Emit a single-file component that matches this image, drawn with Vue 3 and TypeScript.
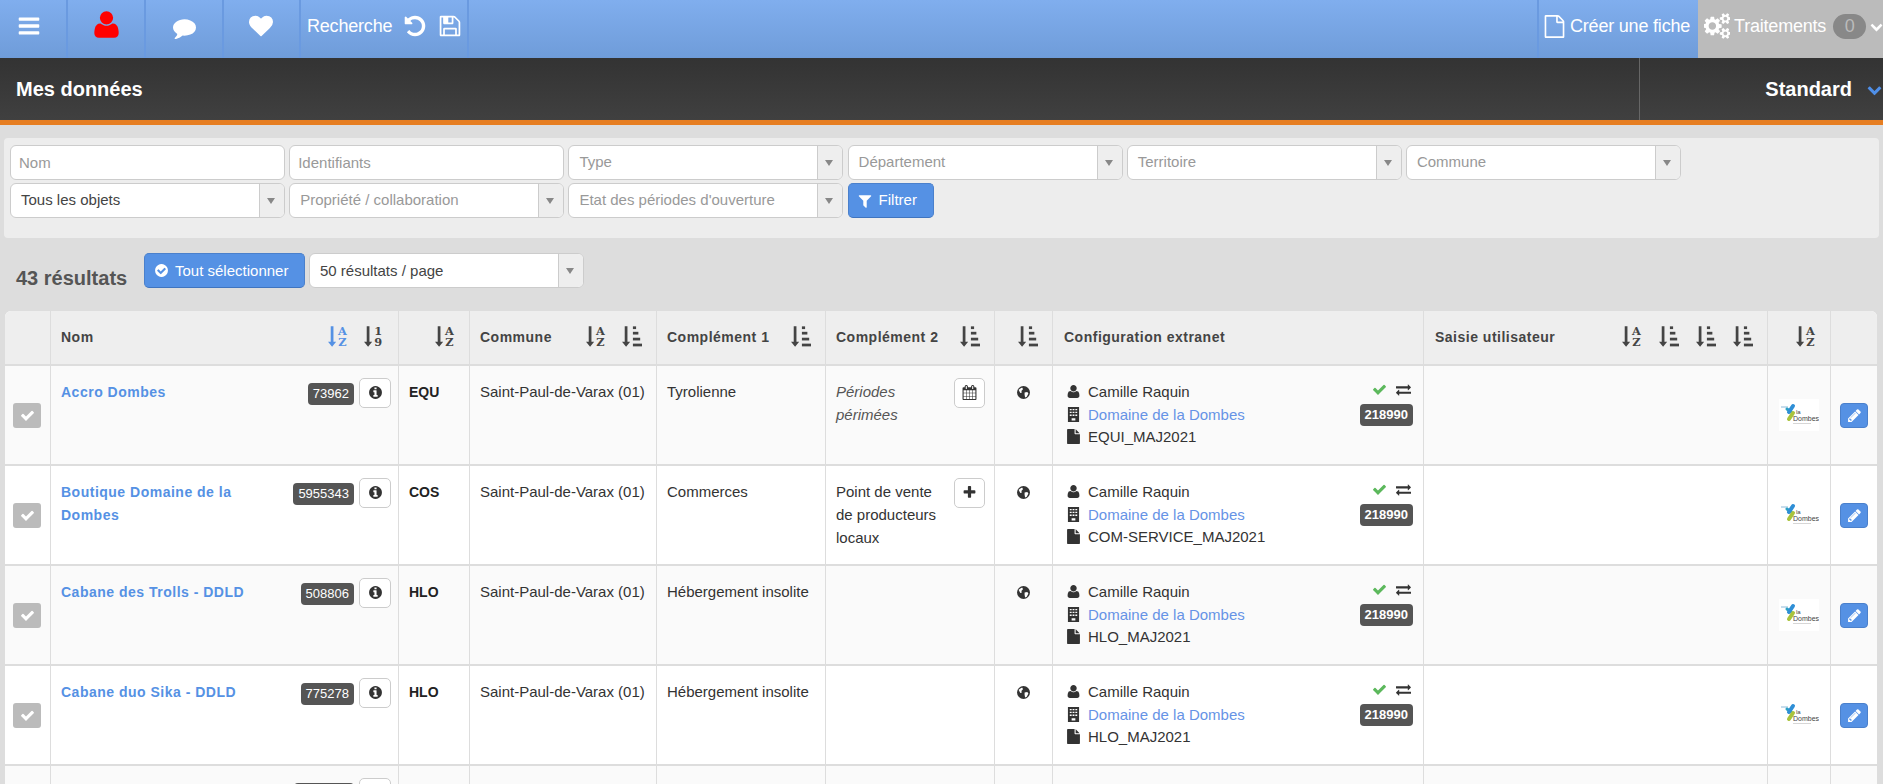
<template>
  <div class="page">
    <header class="topbar">
      <a class="nav-item burger"><svg class="ic" viewBox="0 0 1792 1792"><path :d="ic.bars" /></svg></a>
      <a class="nav-item user"><svg class="ic" viewBox="0 0 1792 1792"><path :d="ic.user" /></svg></a>
      <a class="nav-item comment"><svg class="ic" viewBox="0 0 1792 1792"><path :d="ic.comment" /></svg></a>
      <a class="nav-item heart"><svg class="ic" viewBox="0 0 1792 1792"><path :d="ic.heart" /></svg></a>
      <div class="nav-item search">
        <span>Recherche</span>
        <svg class="ic" viewBox="0 0 1792 1792"><path :d="ic.undo" /></svg>
        <svg class="ic" viewBox="0 0 1792 1792"><path :d="ic.save" /></svg>
      </div>
      <div class="spacer"></div>
      <a class="nav-item create">
        <svg class="ic" viewBox="0 0 1792 1792"><path :d="ic.fileO" /></svg>
        <span>Créer une fiche</span>
      </a>
      <div class="process">
        <svg class="ic" viewBox="0 0 1792 1792"><path :d="ic.cogs" /></svg>
        <span>Traitements</span>
        <b class="count">0</b>
        <svg class="ic caret" viewBox="0 0 1792 1792"><path :d="ic.chevron" /></svg>
      </div>
    </header>

    <div class="titlebar">
      <h1>Mes données</h1>
      <div class="view-switch">
        <strong>Standard</strong>
        <svg class="ic" viewBox="0 0 1792 1792"><path :d="ic.chevron" /></svg>
      </div>
    </div>

    <section class="filters">
      <input class="field input" placeholder="Nom" />
      <input class="field input" placeholder="Identifiants" />
      <div v-for="f in selectsTop" :key="f" class="field select">
        <span class="ph">{{ f }}</span><i class="arrow"></i>
      </div>
      <div class="field select"><span>Tous les objets</span><i class="arrow"></i></div>
      <div class="field select"><span class="ph">Propriété / collaboration</span><i class="arrow"></i></div>
      <div class="field select"><span class="ph">Etat des périodes d'ouverture</span><i class="arrow"></i></div>
      <button class="btn filter-btn">
        <svg class="ic" viewBox="0 0 1792 1792"><path :d="ic.filter" /></svg>Filtrer
      </button>
    </section>

    <div class="results">
      <span class="total">43 résultats</span>
      <button class="btn select-all">
        <svg class="ic" viewBox="0 0 1792 1792"><path :d="ic.checkCircle" /></svg>Tout sélectionner
      </button>
      <div class="field select per-page"><span>50 résultats / page</span><i class="arrow"></i></div>
    </div>

    <div class="table-wrap">
      <table>
        <colgroup>
          <col v-for="w in colWidths" :key="w.id" :style="{ width: w.px + 'px' }" />
        </colgroup>
        <thead>
          <tr>
            <th v-for="h in headers" :key="h.id" :class="h.id">
              <div class="th-in">
                <span class="th-label">{{ h.label }}</span>
                <span class="sorts">
                  <svg v-for="(s, i) in h.sorts" :key="i" class="sort" :class="{ active: s === 'az*' }" viewBox="0 -1.500 22 26.400">
                    <path d="M3 0h3v17h3l-4.500 5.500L0 17h3z" />
                    <template v-if="s === 'n'">
                      <rect x="12" y="0" width="3.500" height="3" />
                      <rect x="12" y="6" width="6" height="3" />
                      <rect x="12" y="12.500" width="8" height="3" />
                      <rect x="12" y="19" width="10" height="3" />
                    </template>
                    <template v-else>
                      <text x="16" y="10" text-anchor="middle">{{ s === '19' ? '1' : 'A' }}</text>
                      <text x="16" y="22" text-anchor="middle">{{ s === '19' ? '9' : 'Z' }}</text>
                    </template>
                  </svg>
                </span>
              </div>
            </th>
          </tr>
        </thead>
        <tbody>
          <tr v-for="r in rows" :key="r.id">
            <td class="mid">
              <span class="tick"><svg class="ic" viewBox="0 0 1792 1792"><path :d="ic.check" /></svg></span>
            </td>
            <td>
              <div class="split">
                <a class="name">{{ r.name }}</a>
                <div class="name-tools">
                  <span class="badge">{{ r.id }}</span>
                  <button class="tool info"><svg class="ic" viewBox="0 0 1792 1792"><path :d="ic.info" /></svg></button>
                </div>
              </div>
            </td>
            <td class="code">{{ r.code }}</td>
            <td>Saint-Paul-de-Varax (01)</td>
            <td>{{ r.c1 }}</td>
            <td>
              <div class="split">
                <span class="c2" :class="{ late: r.tool === 'calendar' }">{{ r.c2 }}</span>
                <button v-if="r.tool" class="tool small">
                  <svg class="ic" viewBox="0 0 1792 1792"><path :d="r.tool === 'calendar' ? ic.calendar : ic.plus" /></svg>
                </button>
              </div>
            </td>
            <td class="globe-cell">
              <svg class="globe" viewBox="0 0 24 24">
                <circle cx="12" cy="12" r="12" />
                <path d="M3 7c3-3 5-4 7-4l1 3-3 3 1 3-3 1zM14 12l5-1 2 3-3 6-3 1-1-5z" fill="#fff" />
              </svg>
            </td>
            <td>
              <div class="split">
                <ul class="conf">
                  <li><svg class="ic" viewBox="128 0 1536 1792"><path :d="ic.user" /></svg>Camille Raquin</li>
                  <li>
                    <svg class="ic" viewBox="0 0 14 16"><path d="M1 0h12v16H1zM3 2v1.500h2V2zm3 0v1.500h2V2zm3 0v1.500h2V2zM3 5v1.500h2V5zm3 0v1.500h2V5zm3 0v1.500h2V5zM3 8v1.500h2V8zm3 0v1.500h2V8zm3 0v1.500h2V8zM5 12v2.500h4V12z" fill-rule="evenodd" /></svg>
                    <a class="link">Domaine de la Dombes</a>
                  </li>
                  <li><svg class="ic" viewBox="128 0 1536 1792"><path :d="ic.file" /></svg>{{ r.tpl }}</li>
                </ul>
                <div class="conf-side">
                  <div class="conf-icons">
                    <svg class="ic ok" viewBox="0 0 1792 1792"><path :d="ic.check" /></svg>
                    <svg class="ic" viewBox="0 0 1792 1792"><path :d="ic.exchange" /></svg>
                  </div>
                  <span class="badge strong">218990</span>
                </div>
              </div>
            </td>
            <td></td>
            <td class="mid center">
              <svg class="logo" viewBox="0 0 40 32">
                <rect width="40" height="32" fill="#fff" />
                <path d="M2 8h7" stroke="#6fa8cf" stroke-width=".8" />
                <path d="M8 10l4 3" stroke="#2aa0c4" stroke-width="3" stroke-linecap="round" />
                <path d="M14 7l-4 6" stroke="#2f8fd6" stroke-width="4" stroke-linecap="round" />
                <path d="M14 14l-4 6" stroke="#a9c33c" stroke-width="4" stroke-linecap="round" />
                <text x="17" y="15" class="logo-la">la</text>
                <text x="14" y="22" class="logo-t">Dombes</text>
                <path d="M14 24.500h18" stroke="#ccc" stroke-width=".8" />
              </svg>
            </td>
            <td class="mid center">
              <button class="edit"><svg class="ic" viewBox="0 0 1792 1792"><path :d="ic.pencil" /></svg></button>
            </td>
          </tr>
          <!-- la ligne suivante est coupee par le bas de la fenetre -->
          <tr>
            <td></td>
            <td>
              <div class="split">
                <a class="name"></a>
                <div class="name-tools">
                  <span class="badge blank"></span>
                  <button class="tool info"><svg class="ic" viewBox="0 0 1792 1792"><path :d="ic.info" /></svg></button>
                </div>
              </div>
            </td>
            <td v-for="n in 9" :key="n"></td>
          </tr>
        </tbody>
      </table>
    </div>
  </div>
</template>

<script setup lang="ts">
// Icones reprises de Font Awesome 4 (grille 1792)
const ic = {
  bars: 'M1664 1344v128q0 26-19 45t-45 19h-1408q-26 0-45-19t-19-45v-128q0-26 19-45t45-19h1408q26 0 45 19t19 45zm0-512v128q0 26-19 45t-45 19h-1408q-26 0-45-19t-19-45v-128q0-26 19-45t45-19h1408q26 0 45 19t19 45zm0-512v128q0 26-19 45t-45 19h-1408q-26 0-45-19t-19-45v-128q0-26 19-45t45-19h1408q26 0 45 19t19 45z',
  user: 'M1600 1405q0 120-73 189.500t-194 69.500h-874q-121 0-194-69.500t-73-189.500q0-53 3.500-103.500t14-109 26.500-108.500 43-97.500 62-81 85.500-53.500 111.500-20q9 0 42 21.500t74.500 48 108 48 133.500 21.500 133.500-21.500 108-48 74.500-48 42-21.500q61 0 111.500 20t85.500 53.500 62 81 43 97.500 26.500 108.500 14 109 3.500 103.500zm-320-893q0 159-112.500 271.500t-271.500 112.500-271.500-112.500-112.500-271.500 112.500-271.500 271.500-112.500 271.500 112.500 112.500 271.500z',
  heart: 'M896 1664q-26 0-44-18l-624-602q-10-8-27.500-26t-55.500-65.500-68-97.500-53.500-121-23.500-138q0-220 127-344t351-124q62 0 126.500 21.500t120 58 95.500 68.500 76 68q36-36 76-68t95.500-68.500 120-58 126.500-21.500q224 0 351 124t127 344q0 221-229 450l-623 600q-18 18-44 18z',
  comment: 'M1792 896q0 174-120 321.500t-326 233-450 85.500q-70 0-145-8-198 175-460 242-49 14-114 22-17 2-30.500-9t-17.500-29v-1q-3-4-.5-12t2-10 4.500-9.500l6-9 7-8.500 8-9q7-8 31-34.500t34.500-38 31-39.500 32.500-51 27-59 26-76q-157-89-247.500-220t-90.500-281q0-130 71-248.500t191-204.500 286-136.500 348-50.500q244 0 450 85.500t326 233 120 321.500z',
  check: 'M1671 566q0 40-28 68l-724 724-136 136q-28 28-68 28t-68-28l-136-136-362-362q-28-28-28-68t28-68l136-136q28-28 68-28t68 28l294 295 656-657q28-28 68-28t68 28l136 136q28 28 28 68z',
  pencil: 'M491 1536l91-91-235-235-91 91v107h128v128h107zm523-928q0-22-22-22-10 0-17 7l-542 542q-7 7-7 17 0 22 22 22 10 0 17-7l542-542q7-7 7-17zm-54-192l416 416-832 832h-416v-416zm683 96q0 53-37 90l-166 166-416-416 166-165q36-38 90-38 53 0 91 38l235 234q37 39 37 91z',
  plus: 'M1600 736v192q0 40-28 68t-68 28h-416v416q0 40-28 68t-68 28h-192q-40 0-68-28t-28-68v-416h-416q-40 0-68-28t-28-68v-192q0-40 28-68t68-28h416v-416q0-40 28-68t68-28h192q40 0 68 28t28 68v416h416q40 0 68 28t28 68z',
  info: 'M1152 1376v-160q0-14-9-23t-23-9h-96v-512q0-14-9-23t-23-9h-320q-14 0-23 9t-9 23v160q0 14 9 23t23 9h96v320h-96q-14 0-23 9t-9 23v160q0 14 9 23t23 9h448q14 0 23-9t9-23zm-128-896v-160q0-14-9-23t-23-9h-192q-14 0-23 9t-9 23v160q0 14 9 23t23 9h192q14 0 23-9t9-23zm640 416q0 209-103 385.500t-279.500 279.500-385.500 103-385.500-103-279.500-279.500-103-385.500 103-385.500 279.500-279.500 385.500-103 385.500 103 279.500 279.500 103 385.500z',
  checkCircle: 'M1412 734q0-28-18-46l-91-90q-19-19-45-19t-45 19l-408 407-226-226q-19-19-45-19t-45 19l-91 90q-18 18-18 46 0 27 18 45l362 362q19 19 45 19 27 0 46-19l543-543q18-18 18-45zm252 162q0 209-103 385.500t-279.500 279.500-385.500 103-385.500-103-279.500-279.500-103-385.500 103-385.500 279.500-279.500 385.500-103 385.500 103 279.500 279.500 103 385.500z',
  filter: 'M1595 295q17 41-14 70l-493 493v742q0 42-39 59-13 5-25 5-27 0-45-19l-256-256q-19-19-19-45v-486l-493-493q-31-29-14-70 17-39 59-39h1280q42 0 59 39z',
  undo: 'M1664 896q0 156-61 298t-164 245-245 164-298 61q-172 0-327-72.500t-264-204.500q-7-10-6.500-22.500t8.500-20.500l137-138q10-9 25-9 16 2 23 12 73 95 179 147t225 52q104 0 198.500-40.500t163.500-109.500 109.500-163.500 40.500-198.500-40.500-198.500-109.500-163.500-163.500-109.500-198.500-40.500q-98 0-188 35.500t-160 101.500l137 138q31 30 14 69-17 40-59 40h-448q-26 0-45-19t-19-45v-448q0-42 40-59 39-17 69 14l130 129q107-101 244.500-156.500t284.500-55.500q156 0 298 61t245 164 164 245 61 298z',
  save: 'M512 1536h768v-384h-768v384zm896 0h128v-896q0-14-10-38.500t-20-34.500l-281-281q-10-10-34-20t-39-10v416q0 40-28 68t-68 28h-576q-40 0-68-28t-28-68v-416h-128v1280h128v-416q0-40 28-68t68-28h832q40 0 68 28t28 68v416zm-384-928v-320q0-13-9.500-22.500t-22.500-9.500h-192q-13 0-22.500 9.500t-9.500 22.500v320q0 13 9.500 22.500t22.500 9.500h192q13 0 22.500-9.500t9.500-22.500zm640 32v928q0 40-28 68t-68 28h-1344q-40 0-68-28t-28-68v-1344q0-40 28-68t68-28h928q40 0 88 20t76 48l280 280q28 28 48 76t20 88z',
  fileO: 'M1596 380q28 28 48 76t20 88v1152q0 40-28 68t-68 28h-1344q-40 0-68-28t-28-68v-1600q0-40 28-68t68-28h896q40 0 88 20t76 48zm-444-244v376h376q-10-29-22-41l-313-313q-12-12-41-22zm384 1528v-1024h-416q-40 0-68-28t-28-68v-416h-768v1536h1280z',
  file: 'M1152 512v-472q22 14 36 28l408 408q14 14 28 36h-472zm-128 32q0 40 28 68t68 28h544v1056q0 40-28 68t-68 28h-1344q-40 0-68-28t-28-68v-1600q0-40 28-68t68-28h800v544z',
  exchange: 'M1792 1184v192q0 13-9.500 22.500t-22.500 9.500h-1376v192q0 13-9.500 22.500t-22.500 9.500q-12 0-24-10l-319-320q-9-9-9-22 0-14 9-23l320-320q9-9 23-9 13 0 22.500 9.500t9.500 22.500v192h1376q13 0 22.500 9.500t9.500 22.500zm0-544q0 14-9 23l-320 320q-9 9-23 9-13 0-22.500-9.500t-9.500-22.500v-192h-1376q-13 0-22.500-9.500t-9.500-22.500v-192q0-13 9.500-22.500t22.500-9.500h1376v-192q0-14 9-23t23-9q12 0 24 10l319 319q9 9 9 23z',
  chevron: 'M1683 808l-742 741q-19 19-45 19t-45-19l-742-741q-19-19-19-45.500t19-45.500l166-165q19-19 45-19t45 19l531 531 531-531q19-19 45-19t45 19l166 165q19 19 19 45.500t-19 45.500z',
  cogs: 'M832 896q0-106-75-181t-181-75-181 75-75 181 75 181 181 75 181-75 75-181zm768 512q0-52-38-90t-90-38-90 38-38 90q0 53 37.500 90.500t90.500 37.500 90.500-37.500 37.500-90.500zm0-1024q0-52-38-90t-90-38-90 38-38 90q0 53 37.500 90.500t90.500 37.500 90.500-37.500 37.500-90.500zm-384 421v185q0 10-7 19.500t-16 10.500l-155 24q-11 35-32 76 34 48 90 115 7 11 7 20 0 12-7 19-23 30-82.500 89.500t-78.500 59.500q-11 0-21-7l-115-90q-37 19-77 31-11 108-23 155-7 24-30 24h-186q-11 0-20-7.500t-10-17.500l-23-153q-34-10-75-31l-118 89q-7 7-20 7-11 0-21-8-144-133-144-160 0-9 7-19 10-14 41-53t47-61q-23-44-35-82l-152-24q-10-1-17-9.500t-7-19.500v-185q0-10 7-19.500t16-10.500l155-24q11-35 32-76-34-48-90-115-7-11-7-20 0-12 7-20 22-30 82-89t79-59q11 0 21 7l115 90q34-18 77-32 11-108 23-154 7-24 30-24h186q11 0 20 7.500t10 17.500l23 153q34 10 75 31l118-89q8-7 20-7 11 0 21 8 144 133 144 160 0 8-7 19-12 16-42 54t-45 60q23 48 34 82l152 23q10 2 17 10.500t7 19.500zm640 533v140q0 16-149 31-12 27-30 52 51 113 51 138 0 4-4 7-122 71-124 71-8 0-46-47t-52-68q-20 2-30 2t-30-2q-14 21-52 68t-46 47q-2 0-124-71-4-3-4-7 0-25 51-138-18-25-30-52-149-15-149-31v-140q0-16 149-31 13-29 30-52-51-113-51-138 0-4 4-7 4-2 35-20t59-34 30-16q8 0 46 46.500t52 67.500q20-2 30-2t30 2q51-71 92-112l6-2q4 0 124 70 4 3 4 7 0 25-51 138 17 23 30 52 149 15 149 31zm0-1024v140q0 16-149 31-12 27-30 52 51 113 51 138 0 4-4 7-122 71-124 71-8 0-46-47t-52-68q-20 2-30 2t-30-2q-14 21-52 68t-46 47q-2 0-124-71-4-3-4-7 0-25 51-138-18-25-30-52-149-15-149-31v-140q0-16 149-31 13-29 30-52-51-113-51-138 0-4 4-7 4-2 35-20t59-34 30-16q8 0 46 46.500t52 67.500q20-2 30-2t30 2q51-71 92-112l6-2q4 0 124 70 4 3 4 7 0 25-51 138 17 23 30 52 149 15 149 31z',
  calendar: 'M192 1664h288v-288h-288v288zm352 0h320v-288h-320v288zm-352-352h288v-320h-288v320zm352 0h320v-320h-320v320zm-352-384h288v-288h-288v288zm736 736h320v-288h-320v288zm-384-736h320v-288h-320v288zm768 736h288v-288h-288v288zm-384-352h320v-320h-320v320zm-352-864v-288q0-13-9.500-22.500t-22.500-9.500h-64q-13 0-22.500 9.500t-9.500 22.500v288q0 13 9.500 22.500t22.500 9.500h64q13 0 22.500-9.500t9.500-22.500zm736 864h288v-320h-288v320zm-384-384h320v-288h-320v288zm384 0h288v-288h-288v288zm32-480v-288q0-13-9.500-22.500t-22.500-9.500h-64q-13 0-22.500 9.500t-9.500 22.500v288q0 13 9.500 22.500t22.500 9.500h64q13 0 22.500-9.500t9.500-22.500zm384-64v1280q0 52-38 90t-90 38h-1408q-52 0-90-38t-38-90v-1280q0-52 38-90t90-38h128v-96q0-66 47-113t113-47h64q66 0 113 47t47 113v96h384v-96q0-66 47-113t113-47h64q66 0 113 47t47 113v96h128q52 0 90 38t38 90z',
}

const selectsTop = ['Type', 'Département', 'Territoire', 'Commune']

const colWidths = [46, 348, 71, 187, 169, 169, 58, 371, 344, 63, 46].map((px, id) => ({ id, px }))

const headers = [
  { id: 'sel', label: '', sorts: [] },
  { id: 'nom', label: 'Nom', sorts: ['az*', '19'] },
  { id: 'type', label: '', sorts: ['az'] },
  { id: 'commune', label: 'Commune', sorts: ['az', 'n'] },
  { id: 'c1', label: 'Complément 1', sorts: ['n'] },
  { id: 'c2h', label: 'Complément 2', sorts: ['n'] },
  { id: 'geo', label: '', sorts: ['n'] },
  { id: 'confh', label: 'Configuration extranet', sorts: [] },
  { id: 'saisie', label: 'Saisie utilisateur', sorts: ['az', 'n', 'n', 'n'] },
  { id: 'logoh', label: '', sorts: ['az'] },
  { id: 'act', label: '', sorts: [] },
]

const rows = [
  { id: '73962', name: 'Accro Dombes', code: 'EQU', c1: 'Tyrolienne', c2: 'Périodes périmées', tool: 'calendar', tpl: 'EQUI_MAJ2021' },
  { id: '5955343', name: 'Boutique Domaine de la Dombes', code: 'COS', c1: 'Commerces', c2: 'Point de vente de producteurs locaux', tool: 'plus', tpl: 'COM-SERVICE_MAJ2021' },
  { id: '508806', name: 'Cabane des Trolls - DDLD', code: 'HLO', c1: 'Hébergement insolite', c2: '', tool: '', tpl: 'HLO_MAJ2021' },
  { id: '775278', name: 'Cabane duo Sika - DDLD', code: 'HLO', c1: 'Hébergement insolite', c2: '', tool: '', tpl: 'HLO_MAJ2021' },
]
</script>

<style>
html, body {
  height: 100%;
  overflow: hidden;
  background: #ddd;
}
</style>

<style scoped>
.page {
  font-family: "Liberation Sans", Arial, sans-serif;
  font-size: 15px;
  color: #333;
}
.ic {
  display: block;
  fill: currentColor;
  flex: none;
}

/* barre du haut */
.topbar {
  display: flex;
  height: 58px;
  background: linear-gradient(#80aeee, #6f9cd9);
  color: #fff;
}
.nav-item {
  display: flex;
  align-items: center;
  justify-content: center;
  border-right: 2px solid #6a9ae0;
  box-sizing: border-box;
}
.burger { width: 68px; padding: 0 9px 6px 0; }
.burger .ic { width: 24px; height: 24px; }
.user { width: 78px; padding-bottom: 9px; color: #f00; }
.user .ic { width: 31px; height: 31px; }
.comment { width: 78px; padding-bottom: 3px; }
.comment .ic { width: 23px; height: 23px; }
.heart { width: 77px; padding: 0 2px 6px 0; }
.heart .ic { width: 24px; height: 24px; }
.search {
  width: 168px;
  justify-content: flex-start;
  padding: 0 0 6px 6px;
  font-size: 18px;
  letter-spacing: -0.2px;
}
.search .ic { width: 24px; height: 24px; margin-left: 11px; }
.search .ic + .ic { margin-left: 11px; }
.spacer { flex: 1; }
.create {
  width: 161px;
  justify-content: flex-start;
  border-left: 2px solid #6a9ae0;
  border-right: 0;
  padding: 0 0 6px 4px;
  gap: 4px;
  font-size: 18px;
  letter-spacing: -0.2px;
}
.create .ic { width: 23px; height: 23px; }
.process {
  width: 185px;
  display: flex;
  align-items: center;
  background: #bbb;
  font-size: 18px;
  letter-spacing: -0.2px;
  padding: 0 0 6px 6px;
  box-sizing: border-box;
  color: #fff;
}
.process > .ic:first-child { width: 26px; height: 26px; margin-right: 4px; }
.count {
  width: 36px;
  height: 25px;
  line-height: 25px;
  margin-left: 7px;
  text-align: center;
  border-radius: 13px;
  background: #888;
  color: #bbb;
  font-weight: 400;
}
.caret { width: 13px; height: 13px; margin-left: 4px; }

/* titre */
.titlebar {
  display: flex;
  justify-content: space-between;
  height: 62px;
  border-bottom: 5px solid #e67e22;
  background: linear-gradient(#333, #404040);
  color: #fff;
}
.titlebar h1 {
  margin: 0;
  padding-left: 16px;
  font-size: 20px;
  line-height: 62px;
}
.view-switch {
  display: flex;
  align-items: center;
  justify-content: flex-end;
  width: 244px;
  box-sizing: border-box;
  border-left: 1px solid #666;
  padding-right: 1px;
  font-size: 20px;
}
.view-switch .ic { width: 15px; height: 15px; margin-left: 15px; color: #4f8fe8; }

/* filtres */
.filters {
  display: grid;
  grid-template-columns: repeat(6, 275px);
  grid-auto-rows: 35px;
  column-gap: 4.200px;
  row-gap: 3px;
  margin: 13px 4px 0;
  height: 100px;
  box-sizing: border-box;
  padding: 7px 6px;
  background: #ededed;
  border-radius: 4px;
}
.field {
  box-sizing: border-box;
  border: 1px solid #ccc;
  border-radius: 6px;
  background: #fff;
  font: inherit;
  color: #444;
  min-width: 0;
}
.input { padding: 0 8px; outline: 0; }
.input::placeholder { color: #999; opacity: 1; }
.select {
  display: flex;
  align-items: center;
  padding-left: 10px;
  overflow: hidden;
}
.select span { flex: 1; white-space: nowrap; padding-bottom: 2px; }
.ph { color: #999; }
.arrow {
  position: relative;
  flex: none;
  width: 24px;
  height: 100%;
  background: #eee;
  border-left: 1px solid #ccc;
}
.arrow::after {
  content: "";
  position: absolute;
  left: 7px;
  top: 14px;
  border: 4px solid transparent;
  border-top: 6px solid #888;
  border-bottom: 0;
}
.btn {
  display: flex;
  align-items: center;
  height: 35px;
  box-sizing: border-box;
  border: 1px solid #4a80cc;
  border-bottom-color: #3f74bf;
  border-radius: 5px;
  background: #5591e4;
  color: #fff;
  font: inherit;
}
.filter-btn { width: 86px; padding: 0 8px 2px; gap: 6px; }
.filter-btn .ic { width: 16px; height: 16px; margin-top: 2px; }

/* resultats */
.results {
  display: flex;
  align-items: flex-start;
  height: 73px;
  padding: 15px 0 0 16px;
  box-sizing: border-box;
}
.total {
  width: 128px;
  margin-top: 14px;
  font-size: 20px;
  font-weight: 700;
  color: #555;
}
.select-all { width: 161px; padding: 0 9px; gap: 6px; }
.select-all .ic { width: 15px; height: 15px; }
.per-page { width: 275px; height: 35px; margin-left: 4px; }
.per-page span { padding-bottom: 0; }

/* tableau */
.table-wrap { padding: 0 6px 0 5px; }
table {
  width: 1872px;
  table-layout: fixed;
  border-collapse: separate;
  border-spacing: 0;
  background: #fff;
  border-radius: 6px 6px 0 0;
}
th {
  height: 55px;
  padding: 0 14px 1px 10px;
  box-sizing: border-box;
  background: #eee;
  border-right: 1px solid #ddd;
  border-bottom: 2px solid #ddd;
  color: #444;
  font-size: 14px;
  letter-spacing: 0.5px;
  text-align: left;
  white-space: nowrap;
}
th.confh, th.saisie { padding-left: 11px; }
th:first-child { border-top-left-radius: 6px; }
th:last-child { border-top-right-radius: 6px; border-right: 0; }
.th-in {
  display: flex;
  align-items: center;
  justify-content: space-between;
}
.sorts { display: flex; gap: 16px; }
.saisie .sorts { gap: 17px; }
.sort {
  width: 20px;
  height: 24px;
  fill: #444;
}
.sort text {
  font-family: "DejaVu Serif", serif;
  font-size: 12.500px;
  font-weight: 700;
}
.sort.active { fill: #5591e4; }

td {
  height: 100px;
  padding: 14px 7px 0 10px;
  box-sizing: border-box;
  vertical-align: top;
  line-height: 23px;
  border-right: 1px solid #ddd;
  border-bottom: 2px solid #ddd;
}
td:last-child { border-right: 0; }
tbody tr:nth-child(odd) td { background: #fafafa; }
.mid { vertical-align: middle; padding: 0; }
.center { text-align: center; padding-left: 0; padding-right: 0; }
.tick {
  display: flex;
  align-items: center;
  justify-content: center;
  width: 28px;
  height: 25px;
  margin-left: 8px;
  border-radius: 3px;
  background: #bbb;
  color: #fff;
}
.tick .ic { width: 15px; height: 15px; }
.split {
  display: flex;
  justify-content: space-between;
  align-items: flex-start;
}
.name {
  font-size: 14px;
  font-weight: 700;
  color: #5591e4;
  padding: 1px 12px 0 0;
  letter-spacing: 0.5px;
}
.name-tools {
  display: flex;
  align-items: flex-start;
  flex: none;
  gap: 5px;
  margin-top: -2px;
}
.badge {
  margin-top: 5px;
  height: 22px;
  line-height: 22px;
  padding: 0 5px;
  border-radius: 4px;
  background: #555;
  color: #fff;
  font-size: 13px;
}
.blank { width: 50px; }
.strong { font-weight: 700; margin-top: 3px; }
.tool {
  display: flex;
  align-items: center;
  justify-content: center;
  width: 32px;
  height: 30px;
  padding: 0 0 2px;
  box-sizing: border-box;
  background: #fff;
  border: 1px solid #ccc;
  border-radius: 5px;
  color: #333;
}
.tool .ic { width: 15px; height: 15px; }
.small { width: 31px; flex: none; margin: -2px 2px 0 0; }
.c2 { padding-right: 12px; }
td.code { padding-top: 15px; font-size: 14px; font-weight: 700; color: #222; }
.late { font-style: italic; color: #555; }
.globe-cell { padding-left: 0; padding-right: 0; }
.globe { display: block; width: 13px; height: 13px; margin: 6px auto 0; fill: #333; }
.conf {
  list-style: none;
  margin: 0;
  padding: 0 0 0 4px;
  line-height: 23px;
}
.conf li { display: flex; align-items: center; gap: 8px; }
.conf li + li + li { margin-top: -1px; }
.conf li .ic { width: 13px; height: 15px; }
.link { color: #6693e6; }
.conf-side {
  display: flex;
  flex-direction: column;
  align-items: flex-end;
  padding-right: 3px;
}
.conf-icons {
  display: flex;
  align-items: center;
  gap: 9px;
  height: 24px;
  padding-right: 2px;
  margin-top: -3px;
}
.conf-icons .ic { width: 15px; height: 15px; }
.conf-icons .ok { color: #5cb85c; }
.logo { display: inline-block; width: 40px; height: 32px; vertical-align: middle; }
.logo-la { font: 6px "Liberation Sans", sans-serif; fill: #444; }
.logo-t { font: 7px "Liberation Sans", sans-serif; fill: #444; }
.edit {
  display: flex;
  align-items: center;
  justify-content: center;
  width: 28px;
  height: 25px;
  margin-left: 9px;
  padding: 0;
  background: #5591e4;
  border: 1px solid #4a80cc;
  border-radius: 4px;
  color: #fff;
}
.edit .ic { width: 15px; height: 15px; }
</style>
